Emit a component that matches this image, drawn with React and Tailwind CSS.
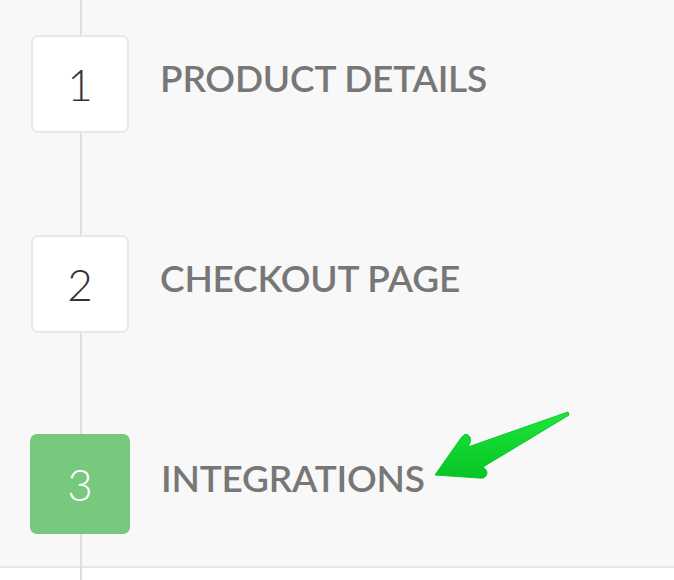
import React from 'react';

const steps = [
  { n: 1, label: 'PRODUCT DETAILS' },
  { n: 2, label: 'CHECKOUT PAGE' },
  { n: 3, label: 'INTEGRATIONS', active: true },
];

function Arrow() {
  return (
    <svg className="absolute left-0 top-0" width="674" height="580" viewBox="0 0 674 580">
      <defs>
        <linearGradient id="arr" x1="0" y1="0" x2="0" y2="1">
          <stop offset="0" stopColor="#1fe63c" />
          <stop offset="1" stopColor="#05c424" />
        </linearGradient>
      </defs>
      <path
        d="M435 475 L461 438 Q466 431 470 437 Q472 441 468 447 L568 412 L569 415 L483 467 Q489 471 486 476 Q484 479 479 478 Z"
        fill="url(#arr)"
        stroke="#0dc82a"
        strokeWidth="1"
        strokeLinejoin="round"
      />
    </svg>
  );
}

export default function App() {
  return (
    <div className="relative h-[580px] w-[674px] overflow-hidden bg-white font-['Lato',sans-serif]">
      <div className="h-[568px] border-b-2 border-[#e6e6e6] bg-[#f8f8f8] pt-[34px]">
        {/* connector line behind the boxes */}
        <div className="absolute left-[80px] top-0 h-full w-[2px] bg-[#dedede]" />
        <div className="relative flex flex-col gap-[100px]">
          {steps.map((s) => (
            <div key={s.n} className="flex h-[100px] items-center">
              {s.active ? (
                <div className="ml-[30px] flex h-[100px] w-[100px] items-center justify-center rounded-[7px] bg-[#77c97e] text-[44px] font-light text-white">
                  {s.n}
                </div>
              ) : (
                <div className="ml-[31px] flex h-[98px] w-[98px] items-center justify-center rounded-[7px] border-2 border-[#e8e8e8] bg-white text-[44px] font-light text-[#333]">
                  {s.n}
                </div>
              )}
              <span className="ml-[31px] mb-[13px] text-[37px] font-semibold tracking-[-0.2px] text-[#777]">
                {s.label}
              </span>
            </div>
          ))}
        </div>
      </div>
      <Arrow />
    </div>
  );
}
